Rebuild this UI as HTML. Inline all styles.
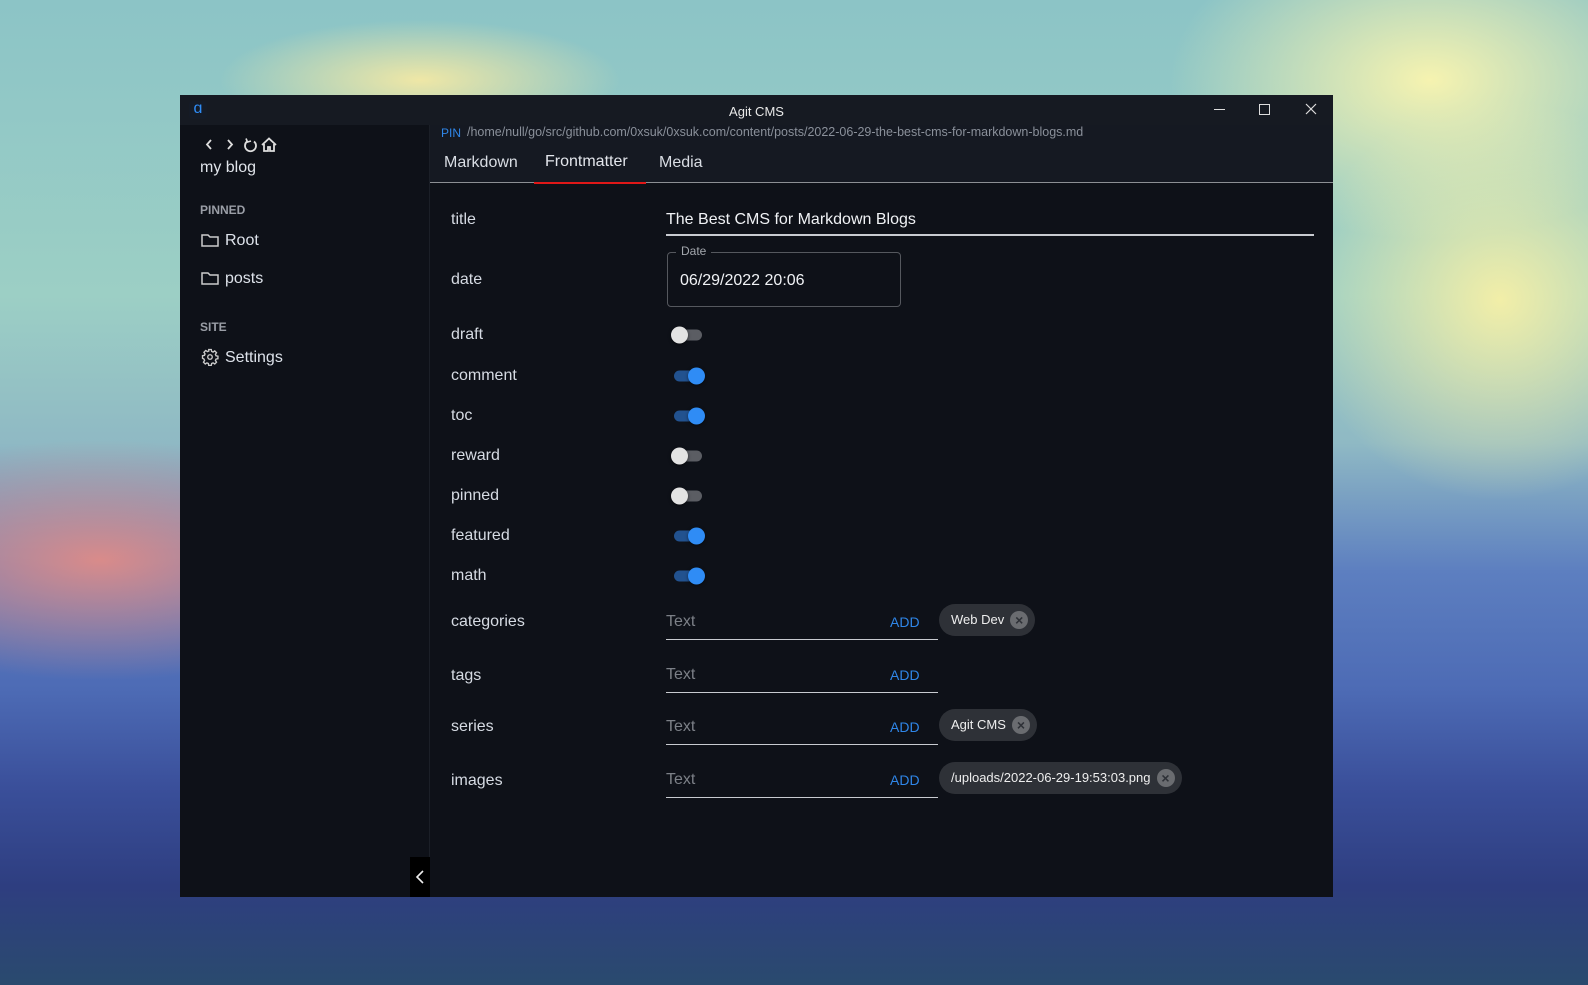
<!DOCTYPE html>
<html><head><meta charset="utf-8"><style>
*{box-sizing:border-box;margin:0;padding:0}
body{width:1588px;height:985px;overflow:hidden;position:relative;font-family:"Liberation Sans",sans-serif;
background:
radial-gradient(ellipse 260px 160px at 1430px 80px,#f6f3b0 0%,rgba(246,243,176,0) 100%),
radial-gradient(ellipse 200px 200px at 1500px 300px,#f2eea8 0%,rgba(242,238,168,0) 100%),
radial-gradient(ellipse 200px 60px at 420px 80px,#efe7a6 0%,rgba(239,231,166,0) 100%),
radial-gradient(ellipse 300px 120px at 100px 560px,#d98b8a 0%,rgba(217,139,138,0) 100%),
linear-gradient(180deg,#8cc4c6 0%,#9ccfc5 30%,#8fb9c4 45%,#5d7fc0 58%,#4d6bb5 70%,#3a4f9a 80%,#2e3e80 90%,#2a4a6e 100%);}
.win{position:absolute;left:180px;top:95px;width:1153px;height:802px;background:#0e1118;color:#dde2ea;}
.tb{position:absolute;left:0;top:0;width:100%;height:30px;background:#161a22}
.hdr{position:absolute;left:250px;top:30px;width:903px;height:58px;background:#151922;border-bottom:1px solid #8c8f94}
.side-div{position:absolute;left:249px;top:30px;width:1px;height:772px;background:#1b1f27}
.abs{position:absolute;white-space:nowrap}
.lbl{position:absolute;left:271px;font-size:16px;color:#d6dbe3;transform:translateY(-50%)}
.tg{position:absolute;left:494px;width:28px;height:11px;border-radius:6px;transform:translateY(-50%)}
.tg.off{background:#5b5d63}.tg.on{background:#22528f}
.tg i{position:absolute;top:-3px;width:17px;height:17px;border-radius:50%;box-shadow:0 1px 3px rgba(0,0,0,.5)}
.tg.off i{left:-3px;background:#e3e3e3}.tg.on i{left:14px;background:#2f8cf5}
.tf{position:absolute;left:486px;width:272px;height:40px;border-bottom:1.5px solid #c8cbd0}
.tf span{position:absolute;left:0;top:13px;font-size:16px;color:#7c8087}
.tf b{position:absolute;left:224px;top:14px;font-size:14px;font-weight:normal;color:#2f86e8}
.chip{position:absolute;left:759px;height:32px;border-radius:16px;background:#2e3137;font-size:13px;color:#eee;padding:0 0 0 12px;line-height:32px}
.chip u{text-decoration:none;display:inline-block;width:18px;height:18px;border-radius:50%;background:#6a6c70;color:#2e3137;font-size:14px;line-height:18px;text-align:center;margin:0 7px 0 6px;vertical-align:middle;position:relative;top:-1px;font-weight:bold}
</style></head><body>
<div class="win">
<div class="tb"></div>
<div class="abs" style="left:9px;top:6px;width:18px;height:18px;border-radius:3px;background:#151b26;color:#2f8cf5;font-size:16px;line-height:16px;text-align:center">ɑ</div>
<div class="abs" style="left:0;width:1153px;top:9px;text-align:center;font-size:13px;color:#e8e8e8">Agit CMS</div>
<div class="abs" style="left:1034px;top:14px;width:11px;height:1px;background:#ddd"></div>
<div class="abs" style="left:1079px;top:9px;width:11px;height:11px;border:1px solid #ddd"></div>
<svg class="abs" style="left:1125px;top:8px" width="12" height="12"><path d="M1 1L11 11M11 1L1 11" stroke="#ddd" stroke-width="1.2"/></svg>
<div class="hdr"></div>
<div class="side-div"></div>
<div class="abs" style="left:261px;top:31px;font-size:12px;color:#2f86e8">PIN</div>
<div class="abs" style="left:287px;top:30px;font-size:12.5px;color:#8a909a">/home/null/go/src/github.com/0xsuk/0xsuk.com/content/posts/2022-06-29-the-best-cms-for-markdown-blogs.md</div>
<div class="abs" style="left:264px;top:59px;font-size:16px;color:#d9dde4">Markdown</div>
<div class="abs" style="left:365px;top:58px;font-size:16px;color:#e3e6ec">Frontmatter</div>
<div class="abs" style="left:479px;top:59px;font-size:16px;color:#d9dde4">Media</div>
<div class="abs" style="left:354px;top:87px;width:112px;height:2px;background:#e01818"></div>
<!-- sidebar -->
<svg class="abs" style="left:22px;top:41px" width="80" height="18" fill="none" stroke="#ddd" stroke-width="1.8">
<path d="M9 4L5 8.5L9 13"/><path d="M26 4L30 8.5L26 13"/>
<path d="M52 5.5A5.5 5.5 0 1 1 45 5.5"/><path d="M44 2.5L45.5 6L49 5" stroke-width="1.6"/>
<path d="M60 9L67 2.5L74 9M62 8V15H66V11H68V15H72V8"/></svg>
<div class="abs" style="left:20px;top:64px;font-size:16px;color:#e0e4ea">my blog</div>
<div class="abs" style="left:20px;top:108px;font-size:12px;font-weight:bold;color:#9a9ea6">PINNED</div>
<svg class="abs" style="left:21px;top:138px" width="18" height="14" fill="none" stroke="#ccc" stroke-width="1.5"><path d="M1 2H7L9 4H17V13H1Z"/></svg>
<div class="abs" style="left:45px;top:137px;font-size:16px;color:#dde2ea">Root</div>
<svg class="abs" style="left:21px;top:176px" width="18" height="14" fill="none" stroke="#ccc" stroke-width="1.5"><path d="M1 2H7L9 4H17V13H1Z"/></svg>
<div class="abs" style="left:45px;top:175px;font-size:16px;color:#dde2ea">posts</div>
<div class="abs" style="left:20px;top:225px;font-size:12px;font-weight:bold;color:#9a9ea6">SITE</div>
<svg class="abs" style="left:21px;top:253px" width="18" height="18" viewBox="0 0 24 24" fill="none" stroke="#ccc" stroke-width="1.8"><circle cx="12" cy="12" r="3"/><path d="M10.3 2h3.4l.5 2.6 1.9.8 2.2-1.5 2.4 2.4-1.5 2.2.8 1.9 2.6.5v3.4l-2.6.5-.8 1.9 1.5 2.2-2.4 2.4-2.2-1.5-1.9.8-.5 2.6h-3.4l-.5-2.6-1.9-.8-2.2 1.5-2.4-2.4 1.5-2.2-.8-1.9L2 13.7v-3.4l2.6-.5.8-1.9-1.5-2.2 2.4-2.4 2.2 1.5 1.9-.8z"/></svg>
<div class="abs" style="left:45px;top:254px;font-size:16px;color:#dde2ea">Settings</div>
<div class="abs" style="left:230px;top:762px;width:20px;height:40px;background:#000"></div>
<svg class="abs" style="left:234px;top:775px" width="12" height="14" fill="none" stroke="#eee" stroke-width="1.6"><path d="M9 1L3 7L9 13"/></svg>
<!-- form -->
<div class="lbl" style="top:125px">title</div>
<div class="abs" style="left:486px;top:116px;font-size:16px;color:#f0f2f5">The Best CMS for Markdown Blogs</div>
<div class="abs" style="left:486px;top:139px;width:648px;height:1.5px;background:#c8cbd0"></div>
<div class="lbl" style="top:185px">date</div>
<div class="abs" style="left:487px;top:157px;width:234px;height:55px;border:1px solid #55585e;border-radius:4px"></div>
<div class="abs" style="left:496px;top:149px;padding:0 5px;background:#0e1118;font-size:12px;color:#a3a7ad">Date</div>
<div class="abs" style="left:500px;top:177px;font-size:16px;color:#f0f2f5">06/29/2022 20:06</div>
<div class="lbl" style="top:240px">draft</div><div class="tg off" style="top:240px"><i></i></div>
<div class="lbl" style="top:281px">comment</div><div class="tg on" style="top:281px"><i></i></div>
<div class="lbl" style="top:321px">toc</div><div class="tg on" style="top:321px"><i></i></div>
<div class="lbl" style="top:361px">reward</div><div class="tg off" style="top:361px"><i></i></div>
<div class="lbl" style="top:401px">pinned</div><div class="tg off" style="top:401px"><i></i></div>
<div class="lbl" style="top:441px">featured</div><div class="tg on" style="top:441px"><i></i></div>
<div class="lbl" style="top:481px">math</div><div class="tg on" style="top:481px"><i></i></div>
<div class="lbl" style="top:527px">categories</div>
<div class="tf" style="top:505px"><span>Text</span><b>ADD</b></div>
<div class="chip" style="top:509px">Web Dev<u>×</u></div>
<div class="lbl" style="top:581px">tags</div>
<div class="tf" style="top:558px"><span>Text</span><b>ADD</b></div>
<div class="lbl" style="top:632px">series</div>
<div class="tf" style="top:610px"><span>Text</span><b>ADD</b></div>
<div class="chip" style="top:614px">Agit CMS<u>×</u></div>
<div class="lbl" style="top:686px">images</div>
<div class="tf" style="top:663px"><span>Text</span><b>ADD</b></div>
<div class="chip" style="top:667px">/uploads/2022-06-29-19:53:03.png<u>×</u></div>
</div>
</body></html>
